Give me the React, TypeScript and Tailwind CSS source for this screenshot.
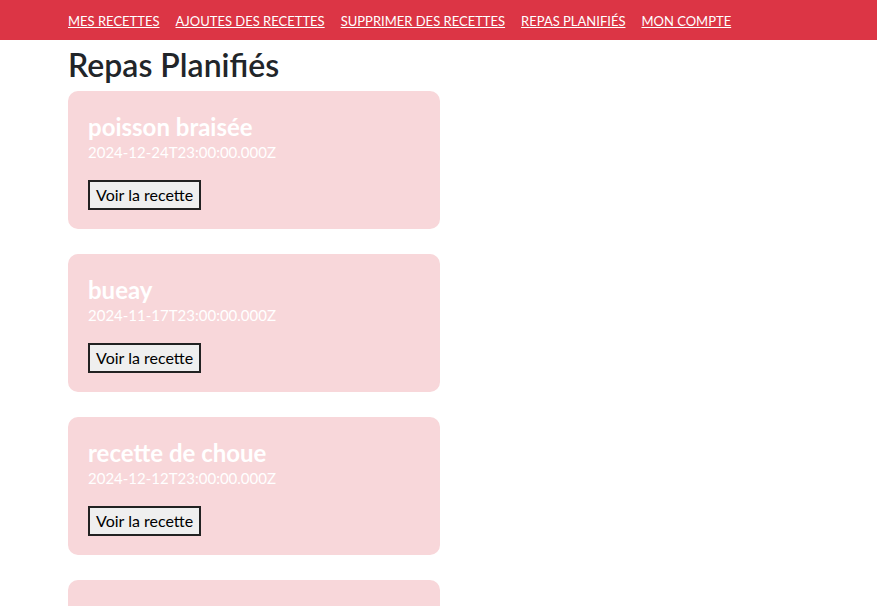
const liens = ['Mes recettes', 'Ajoutes des recettes', 'Supprimer des recettes', 'Repas planifiés', 'Mon compte'];

const repas = [
  { id: 1, nom: 'poisson braisée', date: '2024-12-24T23:00:00.000Z' },
  { id: 2, nom: 'bueay', date: '2024-11-17T23:00:00.000Z' },
  { id: 3, nom: 'recette de choue', date: '2024-12-12T23:00:00.000Z' },
  { id: 4, nom: 'riz sauce arachide', date: '2024-12-30T23:00:00.000Z' },
];

export default function App() {
  return (
    <div className="min-h-screen bg-white text-[#212529] font-['Lato','Liberation_Sans',sans-serif]">
      <nav className="bg-[#dc3545] h-10 flex items-center px-[68px] gap-4">
        {liens.map((l) => (
          <a key={l} href="#" className="text-white text-[13px] uppercase underline pt-[3px]">
            {l}
          </a>
        ))}
      </nav>

      <main className="px-[68px]">
        <h1 className="text-[32px] leading-[1.2] font-semibold mt-[6px] mb-[7px]">Repas Planifiés</h1>
        <div className="flex flex-col gap-[25px] w-[372px]">
          {repas.map((r) => (
            <div key={r.id} className="bg-[#f8d7da] rounded-[10px] px-5 pt-[22px] pb-[19px]">
              <h2 className="text-2xl leading-7 font-bold text-white">{r.nom}</h2>
              <p className="text-white text-[15px] leading-[22px]">{r.date}</p>
              <button className="mt-[17px] h-[30px] px-[6px] bg-[#efefef] border-2 border-[#222] text-black text-base">
                Voir la recette
              </button>
            </div>
          ))}
        </div>
      </main>
    </div>
  );
}
